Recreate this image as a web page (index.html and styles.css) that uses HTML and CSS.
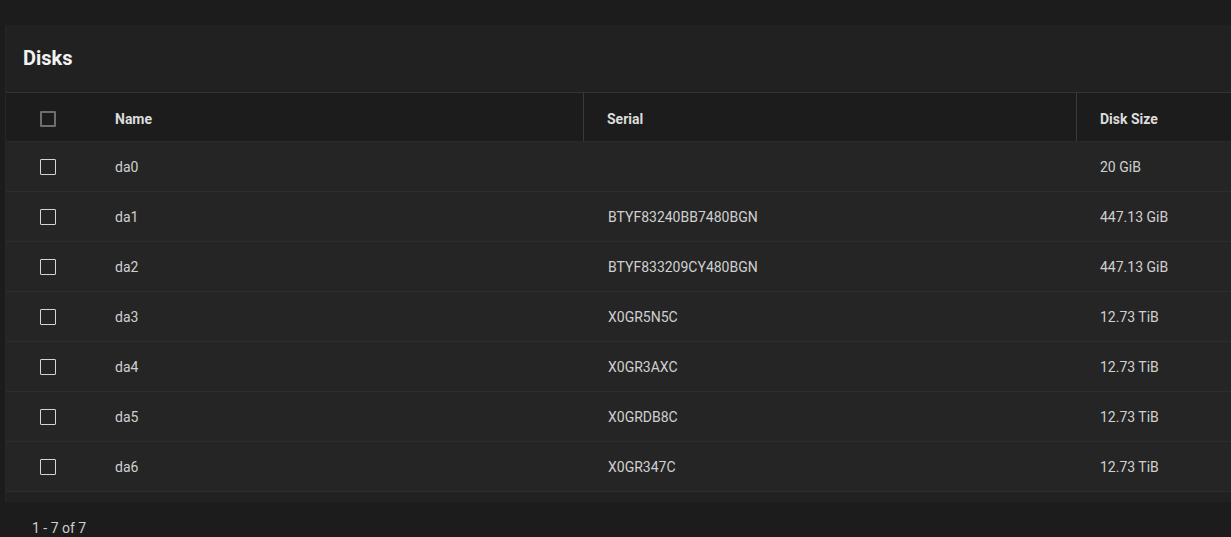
FILE: index.html
```html
<!DOCTYPE html>
<html>
<head>
<meta charset="utf-8">
<link rel="stylesheet" href="styles.css">
</head>
<body>
<div class="page">
  <section class="card">
    <h1 class="card-title">Disks</h1>
    <div class="table">
      <div class="row head">
        <div class="cell check"><span class="box dim"></span></div>
        <div class="cell name">Name</div>
        <div class="cell serial">Serial</div>
        <div class="cell size">Disk Size</div>
      </div>
      <div class="row"><div class="cell check"><span class="box"></span></div><div class="cell name">da0</div><div class="cell serial"></div><div class="cell size">20 GiB</div></div>
      <div class="row"><div class="cell check"><span class="box"></span></div><div class="cell name">da1</div><div class="cell serial">BTYF83240BB7480BGN</div><div class="cell size">447.13 GiB</div></div>
      <div class="row"><div class="cell check"><span class="box"></span></div><div class="cell name">da2</div><div class="cell serial">BTYF833209CY480BGN</div><div class="cell size">447.13 GiB</div></div>
      <div class="row"><div class="cell check"><span class="box"></span></div><div class="cell name">da3</div><div class="cell serial">X0GR5N5C</div><div class="cell size">12.73 TiB</div></div>
      <div class="row"><div class="cell check"><span class="box"></span></div><div class="cell name">da4</div><div class="cell serial">X0GR3AXC</div><div class="cell size">12.73 TiB</div></div>
      <div class="row"><div class="cell check"><span class="box"></span></div><div class="cell name">da5</div><div class="cell serial">X0GRDB8C</div><div class="cell size">12.73 TiB</div></div>
      <div class="row"><div class="cell check"><span class="box"></span></div><div class="cell name">da6</div><div class="cell serial">X0GR347C</div><div class="cell size">12.73 TiB</div></div>
    </div>
  </section>
  <div class="pager">1 - 7 of 7</div>
</div>
</body>
</html>
```
FILE: styles.css
```css
html, body {
  margin: 0;
  padding: 0;
  overflow: hidden;
  background: #1c1c1c;
  font-family: Roboto, "Liberation Sans", sans-serif;
}
.page {
  width: 1231px;
  height: 537px;
  padding: 25px 0 0 6px;
  box-sizing: border-box;
  overflow: hidden;
}
.card {
  width: 1260px;
  background: #212121;
  padding-bottom: 10px;
  box-shadow: -1px 0 0 #262626;
}
.card-title {
  margin: 0;
  height: 68px;
  box-sizing: border-box;
  border-bottom: 1px solid #333333;
  padding: 0 17px 2px;
  display: flex;
  align-items: center;
  font-size: 20px;
  font-weight: 700;
  color: #f2f2f2;
}
.table {
  display: flex;
  flex-direction: column;
}
.row {
  display: grid;
  grid-template-columns: 83px 494px 493px 1fr;
  height: 50px;
  box-sizing: border-box;
  border-bottom: 1px solid #2d2d2d;
  background: #252525;
  color: #d0d0d0;
  font-size: 14px;
}
.row.head {
  height: 49px;
  background: #1c1c1c;
  font-weight: 700;
  color: #dcdcdc;
  border-bottom-color: #2a2a2a;
}
.cell {
  display: flex;
  align-items: center;
}
.head .cell {
  padding-top: 3px;
}
.check {
  justify-content: center;
}
.name { padding-left: 26px; }
.serial { padding-left: 25px; }
.size { padding-left: 24px; }
.head .serial, .head .size { border-left: 1px solid #3a3a3a; padding-left: 23px; }
.box {
  width: 16px;
  height: 16px;
  box-sizing: border-box;
  border: 1.5px solid #d6d6d6;
  border-radius: 1px;
  display: block;
}
.box.dim {
  border-color: #6e6e6e;
  border-width: 2px;
}
.pager {
  padding: 18px 0 0 26px;
  font-size: 14px;
  color: #cfcfcf;
}
```
